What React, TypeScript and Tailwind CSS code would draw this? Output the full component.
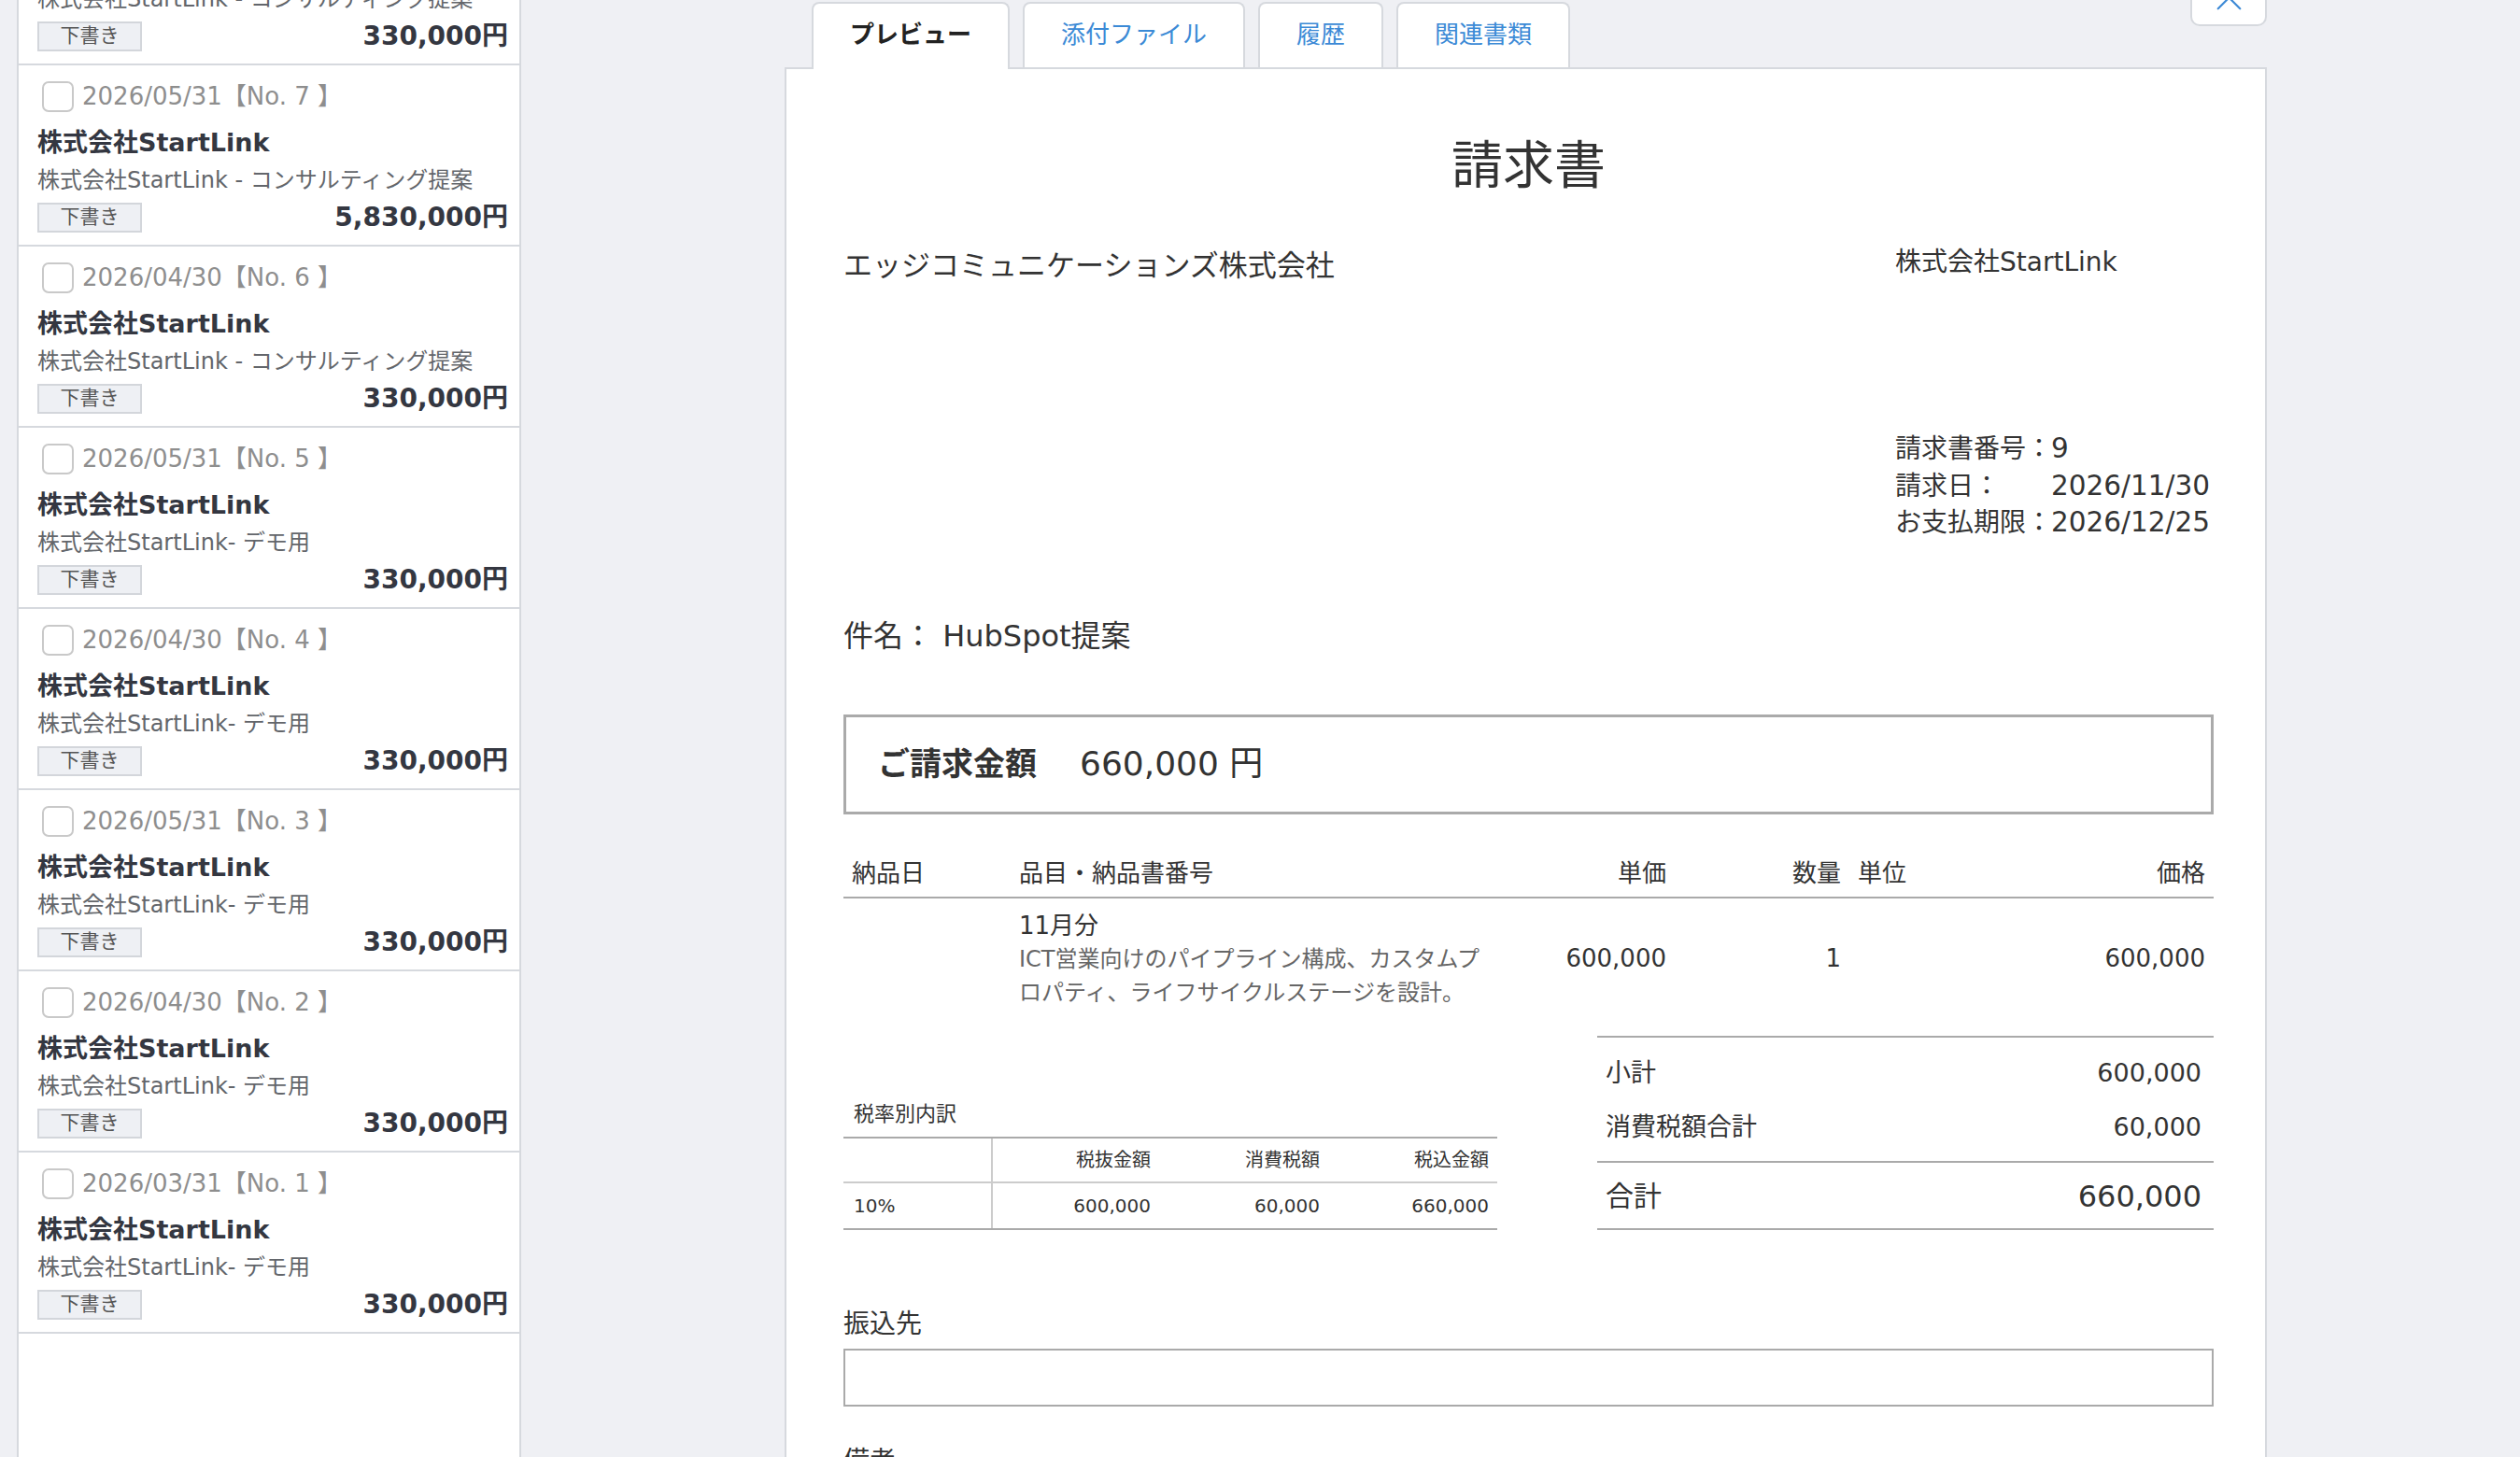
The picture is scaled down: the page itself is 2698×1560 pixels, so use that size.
import { X } from "lucide-react";

type Invoice = {
  date: string;
  no: number;
  subject: string;
  amount: string;
};

const invoices: Invoice[] = [
  { date: "2026/04/30", no: 8, subject: "株式会社StartLink - コンサルティング提案", amount: "330,000円" },
  { date: "2026/05/31", no: 7, subject: "株式会社StartLink - コンサルティング提案", amount: "5,830,000円" },
  { date: "2026/04/30", no: 6, subject: "株式会社StartLink - コンサルティング提案", amount: "330,000円" },
  { date: "2026/05/31", no: 5, subject: "株式会社StartLink- デモ用", amount: "330,000円" },
  { date: "2026/04/30", no: 4, subject: "株式会社StartLink- デモ用", amount: "330,000円" },
  { date: "2026/05/31", no: 3, subject: "株式会社StartLink- デモ用", amount: "330,000円" },
  { date: "2026/04/30", no: 2, subject: "株式会社StartLink- デモ用", amount: "330,000円" },
  { date: "2026/03/31", no: 1, subject: "株式会社StartLink- デモ用", amount: "330,000円" },
];

const tabs = ["プレビュー", "添付ファイル", "履歴", "関連書類"];

function InvoiceRow({ item }: { item: Invoice }) {
  return (
    <div className="flex h-[194px] flex-col border-b-2 border-[#d6d9de] pl-[20px] pr-[12px] pt-[17px]">
      <div className="flex h-[33px] items-center">
        <span className="ml-[5px] h-[33px] w-[34px] shrink-0 rounded-[7px] border-2 border-[#c9c9c9] bg-white" />
        <span className="ml-[9px] whitespace-nowrap text-[26px] text-[#8e8e8e]">
          {item.date}【No. {item.no} 】
        </span>
      </div>
      <div className="mt-[14px] whitespace-nowrap text-[27px] font-bold leading-[38px] text-[#343741]">株式会社StartLink</div>
      <div className="mt-[6px] whitespace-nowrap text-[24px] leading-[30px] text-[#63666b]">{item.subject}</div>
      <div className="mt-[9px] flex items-center justify-between">
        <span className="flex h-[32px] w-[112px] items-center justify-center border-2 border-[#d3d6db] bg-[#eef0f4] text-[21px] text-[#555]">
          下書き
        </span>
        <span className="text-[28px] font-bold leading-[32px] text-[#343741]">{item.amount}</span>
      </div>
    </div>
  );
}

export default function App() {
  return (
    <div className="flex h-[1560px] w-[2698px] overflow-hidden bg-[#eff0f4] font-['DejaVu_Sans','Noto_Sans_CJK_JP',sans-serif]">
      {/* List */}
      <aside className="ml-[18px] h-full w-[540px] shrink-0 overflow-hidden border-x-2 border-[#d6d9de] bg-white">
        <div className="-mt-[124px]">
          {invoices.map((item) => (
            <InvoiceRow key={item.no} item={item} />
          ))}
        </div>
      </aside>

      {/* Preview */}
      <main className="relative ml-[282px] flex w-[1587px] shrink-0 flex-col">
        <button className="absolute right-0 top-[-34px] flex h-[62px] w-[82px] items-center justify-center rounded-[10px] border-2 border-[#d6d9de] bg-white">
          <X className="h-[47px] w-[47px] text-[#3d8ad6]" strokeWidth={1.1} />
        </button>

        <nav className="relative z-10 -mb-[2px] flex h-[74px] items-start gap-[14px] pl-[29px] pt-[2px]">
          {tabs.map((t, i) =>
            i === 0 ? (
              <div
                key={t}
                className="flex h-[72px] items-center rounded-t-[8px] border-2 border-b-0 border-[#d6d9de] bg-white px-[39px] pb-[3px] text-[26px] font-bold text-[#222]"
              >
                {t}
              </div>
            ) : (
              <div
                key={t}
                className="flex h-[70px] items-center rounded-t-[8px] border-2 border-b-0 border-[#d6d9de] bg-white px-[39px] pb-[2px] text-[26px] text-[#3b8ad6]"
              >
                {t}
              </div>
            )
          )}
        </nav>

        <section className="flex-1 overflow-hidden border-2 border-b-0 border-[#d6d9de] bg-white pl-[61px] pr-[55px] pt-[71px] text-[#333]">
          <h1 className="text-center text-[55px] leading-[64px]">請求書</h1>

          <div className="mt-[55px] flex justify-between">
            <div className="text-[31px] leading-[40px]">エッジコミュニケーションズ株式会社</div>
            <div className="w-[341px]">
              <div className="-mt-[3px] whitespace-nowrap text-[28px] leading-[40px]">株式会社StartLink</div>
              <div className="mt-[160px] grid grid-cols-[167px_1fr] whitespace-nowrap text-[28px] leading-[39.5px]">
                <span>請求書番号：</span>
                <span className="text-[29.5px]">9</span>
                <span>請求日：</span>
                <span className="text-[29.5px]">2026/11/30</span>
                <span>お支払期限：</span>
                <span className="text-[29.5px]">2026/12/25</span>
              </div>
            </div>
          </div>

          <div className="mt-[79px] text-[32px] leading-[44px]">件名： HubSpot提案</div>

          <div className="mt-[62px] flex h-[107px] items-center border-[3px] border-[#aaa] pl-[34px]">
            <span className="text-[34px] font-bold">ご請求金額</span>
            <span className="ml-[46px] text-[36px]">660,000 円</span>
          </div>

          {/* Items */}
          <div className="mt-[40px] grid h-[50px] grid-cols-[179px_521px_190px_187px_150px_1fr] items-center border-b-2 border-[#aaa] text-[26px]">
            <span className="px-[9px]">納品日</span>
            <span className="px-[9px]">品目・納品書番号</span>
            <span className="px-[9px] text-right">単価</span>
            <span className="px-[9px] text-right">数量</span>
            <span className="px-[9px]">単位</span>
            <span className="px-[9px] text-right">価格</span>
          </div>
          <div className="grid grid-cols-[179px_521px_190px_187px_150px_1fr] items-center py-[11px] text-[26px]">
            <span />
            <div className="px-[9px]">
              <div className="text-[26px] leading-[36px]">11月分</div>
              <div className="text-[24px] leading-[36px] text-[#666]">
                ICT営業向けのパイプライン構成、カスタムプロパティ、ライフサイクルステージを設計。
              </div>
            </div>
            <span className="px-[9px] text-right">600,000</span>
            <span className="px-[9px] text-right">1</span>
            <span />
            <span className="px-[9px] text-right">600,000</span>
          </div>

          <div className="mt-[17px] flex items-end justify-between">
            {/* Tax breakdown */}
            <div className="w-[700px]">
              <div className="mb-[9px] pl-[11px] text-[22px] leading-[30px]">税率別内訳</div>
              <div className="border-y-2 border-[#aaa] text-[20px]">
                <div className="grid h-[48px] grid-cols-[160px_178px_181px_181px] items-center border-b-2 border-[#ccc]">
                  <span className="h-full border-r-2 border-[#ccc]" />
                  <span className="pr-[9px] text-right">税抜金額</span>
                  <span className="pr-[9px] text-right">消費税額</span>
                  <span className="pr-[9px] text-right">税込金額</span>
                </div>
                <div className="grid h-[48px] grid-cols-[160px_178px_181px_181px] items-center">
                  <span className="flex h-full items-center border-r-2 border-[#ccc] pl-[11px]">10%</span>
                  <span className="pr-[9px] text-right">600,000</span>
                  <span className="pr-[9px] text-right">60,000</span>
                  <span className="pr-[9px] text-right">660,000</span>
                </div>
              </div>
            </div>

            {/* Totals */}
            <div className="w-[660px]">
              <div className="flex flex-col gap-[18px] border-t-2 border-[#aaa] pb-[16px] pl-[9px] pr-[13px] pt-[18px] text-[27px] leading-[40px]">
                <div className="flex justify-between">
                  <span>小計</span>
                  <span>600,000</span>
                </div>
                <div className="flex justify-between">
                  <span>消費税額合計</span>
                  <span>60,000</span>
                </div>
              </div>
              <div className="flex items-center justify-between border-y-2 border-[#aaa] pb-[12px] pl-[9px] pr-[13px] pt-[14px] leading-[44px]">
                <span className="text-[30px]">合計</span>
                <span className="text-[32px]">660,000</span>
              </div>
            </div>
          </div>

          <div className="mt-[83px] text-[28px] leading-[36px]">振込先</div>
          <div className="mt-[8px] h-[62px] border-2 border-[#aaa]" />
          <div className="mt-[41px] text-[28px] leading-[36px]">備考</div>
        </section>
      </main>
    </div>
  );
}
